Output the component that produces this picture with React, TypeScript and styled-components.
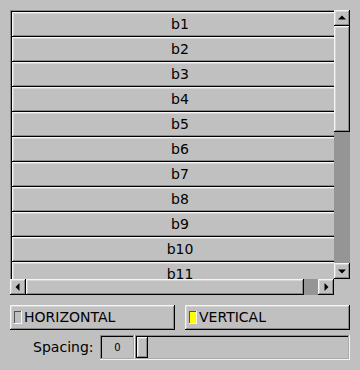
import React from "react";
import styled, { createGlobalStyle, css } from "styled-components";

const GlobalStyle = createGlobalStyle`
  html, body {
    margin: 0;
    padding: 0;
    background: #c0c0c0;
    width: 360px;
    height: 370px;
    overflow: hidden;
  }
  body {
    font-family: "DejaVu Sans", "Liberation Sans", sans-serif;
    font-size: 14px;
    color: #000;
  }
  * { box-sizing: border-box; }
`;

const upBox = css`
  background: #c0c0c0;
  box-shadow: inset -1px -1px 0 #000000, inset 1px 1px 0 #f5f5f5,
    inset -2px -2px 0 #8a8a8a, inset 2px 2px 0 #d5d5d5;
`;

const downBox = css`
  box-shadow: inset -1px -1px 0 #f5f5f5, inset 1px 1px 0 #8a8a8a,
    inset -2px -2px 0 #aaaaaa, inset 2px 2px 0 #000000;
`;

const thinDownBox = css`
  box-shadow: inset -1px -1px 0 #f5f5f5, inset 1px 1px 0 #555555;
`;

const Window = styled.div`
  width: 360px;
  height: 370px;
  padding: 10px 10px 0 10px;
  display: flex;
  flex-direction: column;
`;

const Scroll = styled.div`
  width: 340px;
  height: 285px;
  display: grid;
  grid-template-columns: 324px 16px;
  grid-template-rows: 269px 16px;
`;

const Viewport = styled.div`
  overflow: hidden;
`;

const Pack = styled.div`
  width: 340px;
  padding: 2px;
  display: flex;
  flex-direction: column;
  ${downBox};
`;

const PackButton = styled.div`
  flex: 0 0 25px;
  width: 336px;
  height: 25px;
  padding-bottom: 2px;
  display: flex;
  align-items: center;
  justify-content: center;
  ${upBox};
`;

const VBar = styled.div`
  display: flex;
  flex-direction: column;
`;

const HBar = styled.div`
  display: flex;
  flex-direction: row;
`;

const ArrowButton = styled.div`
  flex: 0 0 16px;
  width: 16px;
  height: 16px;
  display: flex;
  ${upBox};
  svg { display: block; }
`;

const VThumb = styled.div<{ $size: number }>`
  flex: 0 0 ${(p) => p.$size}px;
  ${upBox};
`;

const HThumb = styled.div<{ $size: number }>`
  flex: 0 0 ${(p) => p.$size}px;
  ${upBox};
`;

const Trough = styled.div`
  flex: 1;
  background: #959595;
`;

const Corner = styled.div``;

const ToggleRow = styled.div`
  margin-top: 10px;
  display: flex;
  gap: 10px;
`;

const LightButton = styled.div`
  width: 165px;
  height: 25px;
  display: flex;
  align-items: center;
  padding-left: 4px;
  ${upBox};
`;

const LightLabel = styled.span`
  margin-top: -2px;
`;

const Indicator = styled.span<{ $on: boolean }>`
  width: 8px;
  height: 13px;
  margin-right: 2px;
  background: ${(p) => (p.$on ? "#ffff00" : "#c0c0c0")};
  ${thinDownBox};
`;

const SliderRow = styled.div`
  margin-top: 5px;
  margin-left: -10px;
  display: flex;
  height: 25px;
`;

const SliderLabel = styled.div`
  width: 100px;
  padding-right: 6.5px;
  padding-bottom: 2px;
  display: flex;
  align-items: center;
  justify-content: flex-end;
`;

const ValueBox = styled.div`
  width: 35px;
  height: 25px;
  padding-bottom: 1px;
  display: flex;
  align-items: center;
  justify-content: center;
  font-size: 10px;
  ${downBox};
`;

const Track = styled.div`
  width: 215px;
  height: 25px;
  padding: 2px;
  display: flex;
  ${downBox};
`;

const Knob = styled.div`
  width: 11px;
  height: 21px;
  ${upBox};
`;

const Arrow = ({ dir }: { dir: "up" | "down" | "left" | "right" }) => {
  const pts = {
    up: "4,9.5 8,5.5 12,9.5",
    down: "4,6.5 12,6.5 8,10.5",
    left: "9.5,4 9.5,12 5.5,8",
    right: "6.5,4 6.5,12 10.5,8",
  }[dir];
  return (
    <svg width="16" height="16" viewBox="0 0 16 16">
      <polygon points={pts} fill="#000" />
    </svg>
  );
};

const buttons = Array.from({ length: 11 }, (_, i) => `b${i + 1}`);

export default function App() {
  return (
    <>
      <GlobalStyle />
      <Window>
        <Scroll>
          <Viewport>
            <Pack>
              {buttons.map((b) => (
                <PackButton key={b}>{b}</PackButton>
              ))}
            </Pack>
          </Viewport>
          <VBar>
            <ArrowButton>
              <Arrow dir="up" />
            </ArrowButton>
            <VThumb $size={106} />
            <Trough />
            <ArrowButton>
              <Arrow dir="down" />
            </ArrowButton>
          </VBar>
          <HBar>
            <ArrowButton>
              <Arrow dir="left" />
            </ArrowButton>
            <HThumb $size={278} />
            <Trough />
            <ArrowButton>
              <Arrow dir="right" />
            </ArrowButton>
          </HBar>
          <Corner />
        </Scroll>
        <ToggleRow>
          <LightButton>
            <Indicator $on={false} />
            <LightLabel>HORIZONTAL</LightLabel>
          </LightButton>
          <LightButton>
            <Indicator $on={true} />
            <LightLabel>VERTICAL</LightLabel>
          </LightButton>
        </ToggleRow>
        <SliderRow>
          <SliderLabel>Spacing:</SliderLabel>
          <ValueBox>0</ValueBox>
          <Track>
            <Knob />
          </Track>
        </SliderRow>
      </Window>
    </>
  );
}
